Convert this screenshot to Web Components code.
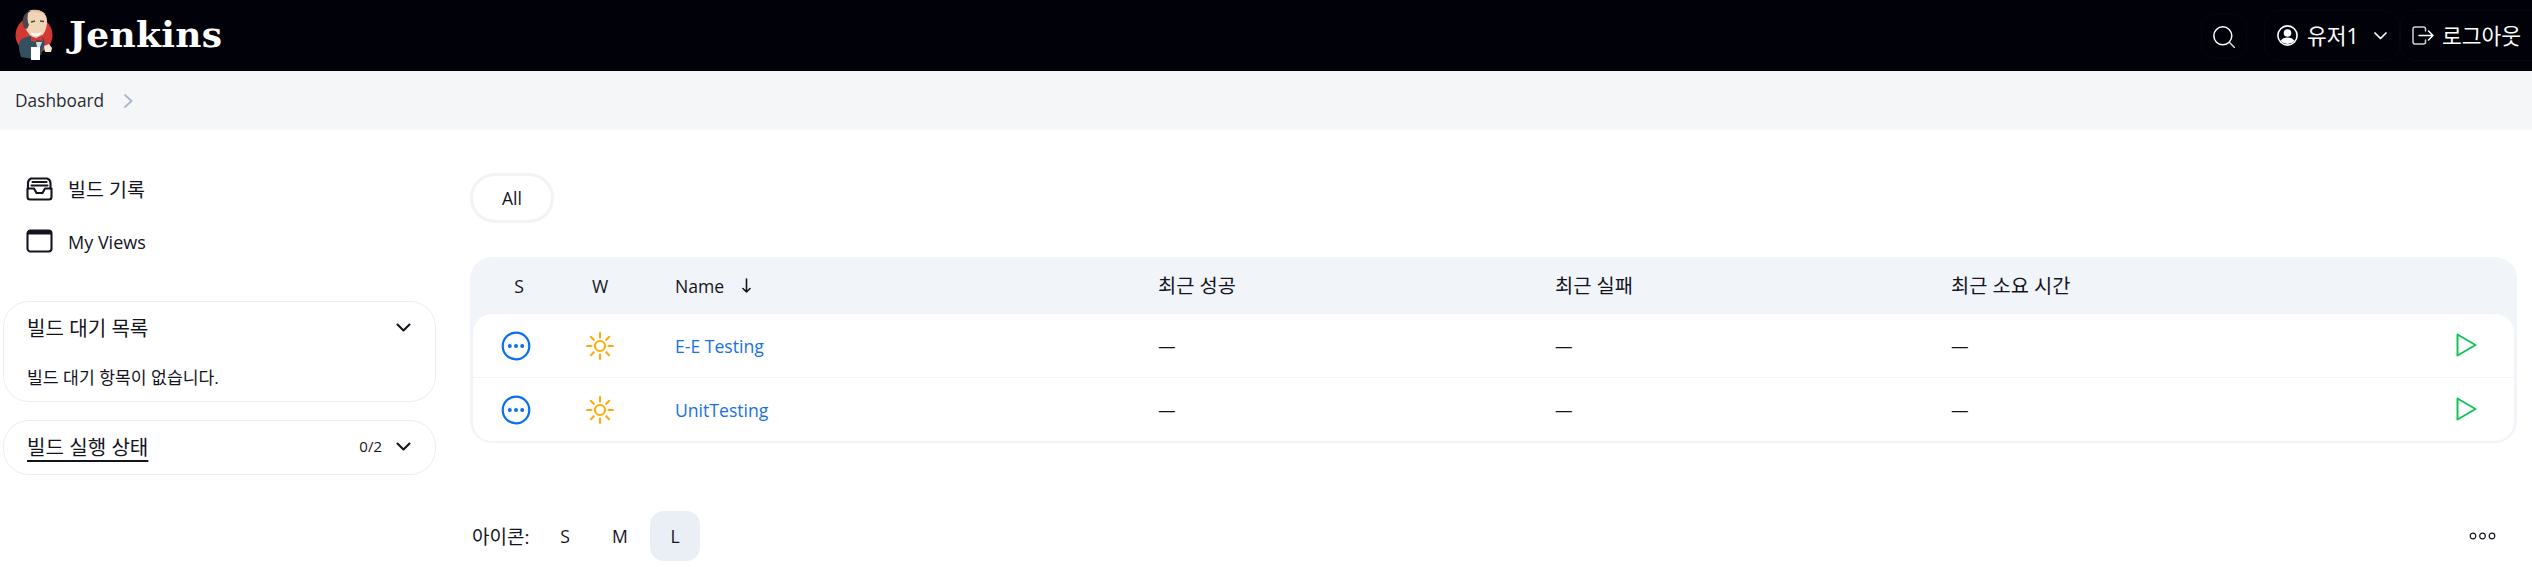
<!DOCTYPE html>
<html lang="ko"><head><meta charset="utf-8"><title>Jenkins</title>
<style>
html,body{margin:0;padding:0;background:#fff;overflow:hidden}
body{font-family:"Open Sans","Noto Sans CJK KR",sans-serif;color:#14141f;font-size:16px}
</style></head><body>
<jk-app>
  <jk-header slot="top"></jk-header>
  <jk-crumb slot="top">Dashboard</jk-crumb>
  <jk-sidebar slot="side">
    <jk-task icon="inbox" size="19.500" lift="2">빌드 기록</jk-task>
    <jk-task icon="window" size="18" lift="-2">My Views</jk-task>
    <jk-card heading="빌드 대기 목록" style="margin-top:34px;height:101px">빌드 대기 항목이 없습니다.</jk-card>
    <jk-card heading="빌드 실행 상태" count="0/2" link style="margin-top:18px;height:55px"></jk-card>
  </jk-sidebar>
  <jk-main slot="main">
    <jk-tab>All</jk-tab>
    <jk-table>
      <jk-row name="E-E Testing"></jk-row>
      <jk-row name="UnitTesting"></jk-row>
    </jk-table>
    <jk-footer></jk-footer>
  </jk-main>
</jk-app>
<script>
const FONT='"Open Sans","Noto Sans CJK KR",sans-serif';
function def(name,html){
  customElements.define(name,class extends HTMLElement{
    constructor(){super();this.attachShadow({mode:'open'}).innerHTML=typeof html==='function'?html(this):html;}
  });
}
const ICONS={
 inbox:`<svg width="27" height="24" viewBox="0 0 27 24" fill="none" stroke="#14141f" stroke-width="2.100" stroke-linejoin="round" stroke-linecap="round"><path d="M2 11.500V6a5 5 0 0 1 3-4.500h16a5 5 0 0 1 3.500 4.500v5.500"/><path d="M1.500 11.500h6.500l2.500 4.500h6l2.500-4.500h6.500V20a2.500 2.500 0 0 1-2.500 2.500H4A2.500 2.500 0 0 1 1.500 20z"/><path d="M6.500 5h14M5.500 8.500h16"/></svg>`,
 window:`<svg width="27" height="24" viewBox="0 0 27 24" fill="none" stroke="#14141f" stroke-width="2.100"><rect x="1.500" y="1.500" width="24" height="21" rx="3"/><path d="M2 3.500h23" stroke-width="4"/></svg>`
};
def('jk-app',`<style>:host{display:block;width:2532px;height:567px;overflow:hidden}
.l{display:grid;grid-template-columns:470px 1fr}</style>
<slot name="top"></slot><div class="l"><slot name="side"></slot><slot name="main"></slot></div>`);

def('jk-header',`<style>
:host{display:flex;align-items:center;height:71px;background:#01010a;color:#fff;font:21.500px ${FONT}}
.logo{display:flex;align-items:center;margin-left:15px;flex:1}
.word{font:700 36px/1 "DejaVu Serif",serif;margin:0 0 4px 16px;color:#fff;letter-spacing:.3px}
.btn{display:flex;align-items:center;box-sizing:border-box;border:1px solid #07070f;border-right:0;border-radius:16px}
.search{width:46px;height:46px;justify-content:center;border-right:1px solid #07070f;margin-right:17px}
.user{height:51px;width:136px;padding-left:12px;border-right:1px solid #07070f}
.out{height:51px;width:132px;padding-left:11px;border-radius:16px 0 0 16px}
.t{margin:0 0 2px 9px;white-space:nowrap}
</style>
<div class="logo">
 <svg width="38" height="52" viewBox="15 8 38 52" style="margin-bottom:2px">
  <circle cx="34" cy="34" r="18.500" fill="#d33833"/>
  <path d="M21 56c-2-6-3-12-1-16 2-3 6-4 10-5l12 1c3 2 3 6 2 9l-3 9-8 4z" fill="#335061"/>
  <path d="M24 22c-1-8 5-13 12-13 7 0 11 5 11 11 0 8-3 15-9 17-6 1-12-5-14-15z" fill="#f0d6b7"/>
  <path d="M24 27c-3-7-1-14 5-17-2 4-2 10 0 14l-2 4z" fill="#49484a"/>
  <path d="M28 10c5-2 13-2 17 3-4-2-11-2-17-3z" fill="#d8bfa4"/>
  <path d="M31 31c3 2 6 2 10 0-1 3-2 4-5 4s-4-1-5-4z" fill="#fff"/>
  <path d="M31 21l4-1M40 20l4 .5" stroke="#49484a" stroke-width="1.300"/>
  <path d="M31 36l5 1 6-3 1 6-6-1-2 2-4-1z" fill="#d33833"/>
  <path d="M36 41h6l-2 5h-3z" fill="#d6dde2"/>
  <path d="M31 46h9v13h-9z" fill="#fff"/>
  <path d="M44 45l5-2 3 4-1 4h-6z" fill="#f4e7d6"/>
 </svg>
 <span class="word">Jenkins</span>
</div>
<div class="btn search"><svg width="22" height="22" viewBox="0 0 22 22" fill="none" stroke="#fff" stroke-width="1.500" stroke-linecap="round" style="margin-top:2px"><circle cx="9.800" cy="9.800" r="9"/><path d="M16.300 16.300L21.500 21.500" stroke="#dcdcdc"/></svg></div>
<div class="btn user">
 <svg width="21" height="21" viewBox="0 0 21 21"><circle cx="10.500" cy="10.500" r="9.600" fill="none" stroke="#fff" stroke-width="1.600"/><circle cx="10.500" cy="8" r="3.800" fill="#fff"/><path d="M3.500 16c1.500-2.500 4-3.500 7-3.500s5.500 1 7 3.500a9.500 9.500 0 0 1-14 0z" fill="#fff"/></svg>
 <span class="t">유저1</span>
 <svg style="margin-left:15px" width="13" height="8" viewBox="0 0 13 8" fill="none" stroke="#fff" stroke-width="1.700" stroke-linecap="round" stroke-linejoin="round"><path d="M1 1l5.500 5.500L12 1"/></svg>
</div>
<div class="btn out">
 <svg width="22" height="19" viewBox="0 0 22 19" fill="none" stroke-width="1.500" stroke-linecap="round" stroke-linejoin="round"><path d="M13.500 5V3a2 2 0 0 0-2-2H3a2 2 0 0 0-2 2v13a2 2 0 0 0 2 2h8.500a2 2 0 0 0 2-2v-2" stroke="#cfcfd2"/><path d="M7 9.500h14M16.500 5l4.500 4.500-4.500 4.500" stroke="#fff"/></svg>
 <span class="t" style="margin-left:8px">로그아웃</span>
</div>`);

def('jk-crumb',`<style>:host{display:flex;align-items:center;height:59px;background:#f5f6f8;padding-left:15px;font:17.300px ${FONT};color:#2b2b33}
svg{margin-left:20px}</style><slot></slot>
<svg width="9" height="14" viewBox="0 0 9 14" fill="none" stroke="#a9b6cc" stroke-width="1.800" stroke-linecap="round" stroke-linejoin="round"><path d="M1 1l6.500 6L1 13"/></svg>`);

def('jk-sidebar',`<style>:host{display:block;box-sizing:border-box;padding:33px 0 0 3px;width:470px}</style><slot></slot>`);

def('jk-task',el=>`<style>:host{display:flex;align-items:center;height:52px;padding-left:23px;font:${el.getAttribute('size')}px ${FONT};color:#14141f}
span{margin-left:15px;${+el.getAttribute('lift')>0?'margin-bottom:':'margin-top:'}${Math.abs(+el.getAttribute('lift'))}px}</style>${ICONS[el.getAttribute('icon')]}<span><slot></slot></span>`);

def('jk-card',el=>{
 const link=el.hasAttribute('link'),count=el.getAttribute('count');
 return `<style>:host{display:block;width:433px;box-sizing:border-box;border:1.500px solid #e9edf4;border-radius:26px;padding:0 24px 0 23px}
.h{display:flex;align-items:center;height:50px;font:20.100px ${FONT}}
.h b{font-weight:400;flex:1;${link?'text-decoration:underline;text-decoration-thickness:1.500px;text-underline-offset:5px;':''}}
.c{font-size:15px;margin-right:14px}
.b{font:17.200px/22px ${FONT};padding-top:15px}</style>
<div class="h"><b>${el.getAttribute('heading')}</b>${count?`<span class="c">${count}</span>`:''}
<svg width="15" height="9" viewBox="0 0 15 9" fill="none" stroke="#14141f" stroke-width="2.100" stroke-linecap="round" stroke-linejoin="round"><path d="M1.500 1.500l6 6 6-6"/></svg></div>
${link?'':'<div class="b"><slot></slot></div>'}`;});

def('jk-main',`<style>:host{display:block;padding:43px 15px 0 0}</style><slot></slot>`);
def('jk-tab',`<style>:host{display:flex;box-sizing:border-box;width:84px;height:50px;border:3px solid #f1f4f7;border-radius:25px;align-items:center;justify-content:center;font:17.500px ${FONT}}</style><slot></slot>`);

const COLS='grid-template-columns:90px 74px 521px 397px 396px 1fr 60px';
def('jk-table',`<style>:host{display:block;margin-top:34px;background:#f1f4f8;border-radius:22px;padding:0 3px 2px}
.head{display:grid;${COLS};height:57px;align-items:center;font:17.600px ${FONT}}
.c{text-align:center}.s{padding-left:2px}.n{padding-left:38px;display:flex;align-items:center}
.n svg{margin-left:18px}.k{font-size:19.800px;margin-bottom:3px}
.body{border-radius:19px;overflow:hidden;display:flex;flex-direction:column;gap:1px;background:#f1f4f8}</style>
<div class="head"><span class="c s">S</span><span class="c">W</span><span class="n">Name<svg width="9" height="15" viewBox="0 0 9 15" fill="none" stroke="#14141f" stroke-width="1.600" stroke-linecap="round" stroke-linejoin="round"><path d="M4.500 1v13M1 10.500l3.500 3.500L8 10.500"/></svg></span>
<span class="k">최근 성공</span><span class="k">최근 실패</span><span class="k">최근 소요 시간</span></div>
<div class="body"><slot></slot></div>`);

def('jk-row',el=>`<style>:host{display:grid;${COLS};height:63px;align-items:center;background:#fff;font:17.600px ${FONT}}
.c{display:flex;justify-content:center}.st{padding-right:4px}.n{padding-left:38px;color:#1870ee}
.a{display:flex;justify-content:flex-end;padding-right:37px;grid-column:7;margin-bottom:1px}
</style>
<span class="c st"><svg width="30" height="30" viewBox="0 0 30 30"><circle cx="15" cy="15" r="13.300" fill="none" stroke="#0b6fef" stroke-width="2.200"/><circle cx="8.800" cy="15" r="2" fill="#0b6fef"/><circle cx="15" cy="15" r="2" fill="#0b6fef"/><circle cx="21.200" cy="15" r="2" fill="#0b6fef"/></svg></span>
<span class="c"><svg width="30" height="30" viewBox="0 0 30 30" fill="none" stroke="#ffab0a" stroke-width="2.100" stroke-linecap="round"><circle cx="15" cy="15" r="5"/><path d="M15 2v4.500M15 23.500V28M2 15h4.500M23.500 15H28M5.800 5.800l3 3M21.200 21.200l3 3M24.200 5.800l-3 3M8.800 21.200l-3 3"/></svg></span>
<span class="n">${el.getAttribute('name')}</span><span>—</span><span>—</span><span>—</span>
<span class="a"><svg width="21" height="24" viewBox="0 0 21 24" fill="none" stroke="#0fc456" stroke-width="2" stroke-linejoin="round"><path d="M1.500 1.500L19.500 12 1.500 22.500z"/></svg></span>`);

def('jk-footer',`<style>:host{display:flex;align-items:center;height:50px;margin-top:68px;font:17.600px ${FONT}}
.s{display:flex;align-items:center;justify-content:center;width:50px;height:50px;border-radius:14px;margin-left:5px;flex:none}
.s.on{background:#eaeef5}.lab{width:63px;margin-left:2px;flex:none;font-size:19px;white-space:nowrap}.sp{flex:1}</style>
<span class="lab">아이콘:</span><span class="s">S</span><span class="s">M</span><span class="s on">L</span><span class="sp"></span>
<svg style="margin-right:21px" width="27" height="8" viewBox="0 0 27 8" fill="none" stroke="#14141f" stroke-width="1.200"><circle cx="4" cy="4" r="2.800"/><circle cx="13.500" cy="4" r="2.800"/><circle cx="23" cy="4" r="2.800"/></svg>`);
</script>
</body></html>
